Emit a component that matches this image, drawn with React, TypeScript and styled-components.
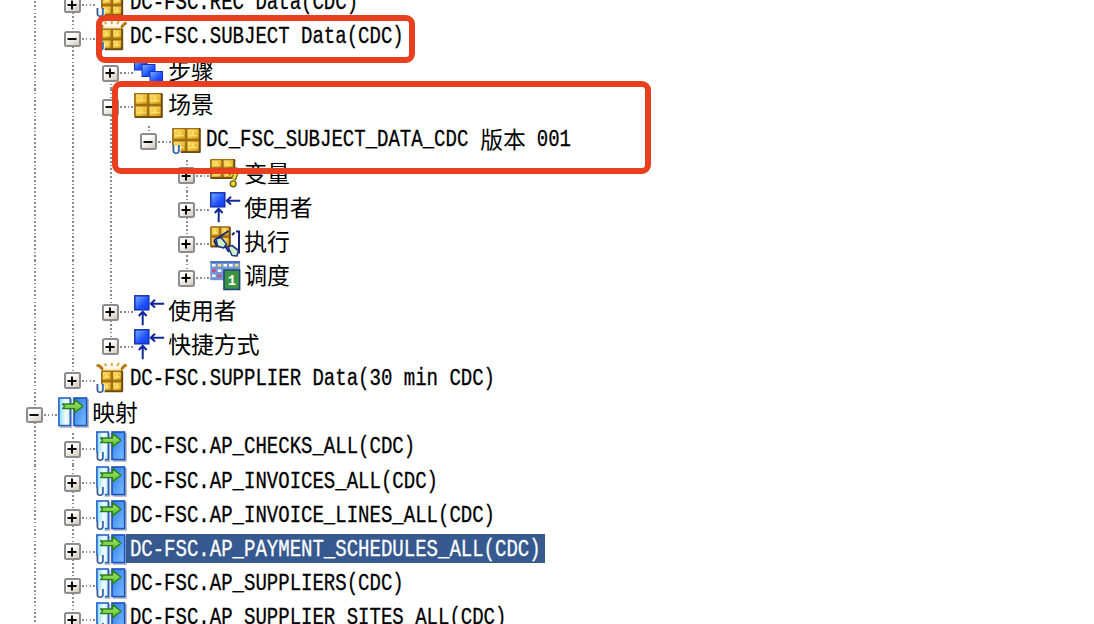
import React from "react";
import styled, { createGlobalStyle } from "styled-components";

const GlobalStyle = createGlobalStyle`
  * { box-sizing: border-box; }
  html, body { margin: 0; padding: 0; background: #fff; overflow: hidden; }
`;

const Page = styled.main`
  position: relative;
  width: 1094px;
  height: 624px;
  overflow: hidden;
  background: #fff;
  color: #000;
`;

const Tree = styled.div`
  display: flex;
  flex-direction: column;
  margin-top: -14px;
  padding-left: 15.5px;
`;

const Row = styled.div`
  display: flex;
  flex: none;
  height: 34.2px;
`;

const dots = "#8c8c8c 0 1.7px, transparent 1.7px 3.8px";

const Guide = styled.div<{ $line: boolean }>`
  flex: none;
  width: 38px;
  background: ${(p) => (p.$line ? `repeating-linear-gradient(180deg, ${dots}) 18px 0 / 2px 100% no-repeat` : "none")};
`;

const Branch = styled.div<{ $up: boolean; $last: boolean }>`
  flex: none;
  display: flex;
  align-items: flex-start;
  width: 42.4px;
  padding: 10.4px 0 0 10.6px;
  background: repeating-linear-gradient(180deg, ${dots}) 18px ${(p) => (p.$up ? 0 : 3)}px / 2px
    ${(p) => (p.$last ? "18px" : "100%")} no-repeat;
`;

const Toggle = styled.span`
  flex: none;
  display: flex;
  align-items: center;
  justify-content: center;
  width: 16.8px;
  height: 16.8px;
  border: 2px solid #8d8d8d;
  border-radius: 2.5px;
  background: linear-gradient(145deg, #fff 30%, #d2cabb);
`;

const Connector = styled.span`
  width: 13px;
  height: 2px;
  margin: 7.4px 0 0 1.6px;
  background: repeating-linear-gradient(90deg, ${dots});
`;

const IconBox = styled.span`
  flex: none;
  width: 30.4px;
  height: 30.4px;
  margin-top: 0.9px;
  svg { display: block; overflow: visible; }
`;

const Label = styled.span<{ $selected?: boolean }>`
  display: flex;
  height: 28.7px;
  margin-top: 0.9px;
  padding: 0 4.4px 0 3.6px;
  color: ${(p) => (p.$selected ? "#fff" : "#000")};
  background: ${(p) => (p.$selected ? "#36598f" : "transparent")};
  white-space: pre;
`;

const Latin = styled.span`
  font: 19.03px/28px "Liberation Mono", monospace;
  transform: scaleY(1.22);
  transform-origin: 50% 20px;
  margin-top: 3.1px;
  -webkit-text-stroke: 0.25px currentColor;
`;

const Han = styled.span`
  font: 22.8px/29px "Noto Sans CJK SC", sans-serif;
  margin-left: 0.4px;
  margin-right: -0.4px;
`;

const Highlight = styled.div<{ $x: number; $y: number; $w: number; $h: number }>`
  position: absolute;
  left: ${(p) => p.$x}px;
  top: ${(p) => p.$y}px;
  width: ${(p) => p.$w}px;
  height: ${(p) => p.$h}px;
  border: 6px solid #e8401f;
  border-radius: 9px;
`;

const Hidden = styled.svg`
  position: absolute;
`;

const Svg = ({ children }: { children: React.ReactNode }) => (
  <svg width="30.4" height="30.4" viewBox="0 0 30.4 30.4">{children}</svg>
);

const Defs = () => (
  <Hidden width="0" height="0">
    <defs>
      <linearGradient id="gold" x1="0" y1="0" x2="1" y2="1">
        <stop offset="0" stopColor="#fbe07a" />
        <stop offset=".5" stopColor="#f1c338" />
        <stop offset="1" stopColor="#cf9418" />
      </linearGradient>
      <linearGradient id="blue" x1="0" y1="0" x2="1" y2="1">
        <stop offset="0" stopColor="#7db4ff" />
        <stop offset=".6" stopColor="#1f52ff" />
        <stop offset="1" stopColor="#0f3df0" />
      </linearGradient>
      <linearGradient id="pale" x1="0" y1="0" x2="1" y2="0">
        <stop offset="0" stopColor="#7fdcff" />
        <stop offset=".6" stopColor="#f4fdff" />
        <stop offset="1" stopColor="#c5eeff" />
      </linearGradient>
      <linearGradient id="deep" x1="0" y1="0" x2="1" y2="1">
        <stop offset="0" stopColor="#2a78e8" />
        <stop offset="1" stopColor="#7cc0ff" />
      </linearGradient>
      <linearGradient id="green" x1="0" y1="0" x2="0" y2="1">
        <stop offset="0" stopColor="#b4f070" />
        <stop offset="1" stopColor="#4dbb28" />
      </linearGradient>
    </defs>
  </Hidden>
);

const Crate = ({ x, y, w, h }: { x: number; y: number; w: number; h: number }) => {
  const cw = (w - 6) / 2;
  const ch = (h - 6) / 2;
  return (
    <g>
      <rect x={x} y={y} width={w} height={h} rx="1.2" fill="#6b4a10" />
      <rect x={x} y={y} width={w - 1.8} height={h - 1.8} rx="1.2" fill="#a06f14" />
      {[0, 1].map((r) =>
        [0, 1].map((c) => {
          const cx = x + 1.5 + c * (cw + 2.4);
          const cy = y + 1.3 + r * (ch + 2.6);
          return (
            <g key={`${r}${c}`}>
              <rect x={cx} y={cy} width={cw} height={ch} rx=".8" fill="url(#gold)" />
              <path d={`M${cx + 1.2} ${cy + ch * 0.66}h${cw - 2.4}M${cx + cw * 0.5} ${cy + ch * 0.2}v${ch * 0.4}`} stroke="#fdea7c" strokeWidth="1.8" opacity=".8" />
            </g>
          );
        })
      )}
    </g>
  );
};

const Badge = () => (
  <g>
    <rect x="-.5" y="21.5" width="9.2" height="9.5" fill="#fff" />
    <text x="-.2" y="30.2" fontFamily="Liberation Sans, sans-serif" fontWeight="700" fontSize="12" fill="#2b5f9e">U</text>
  </g>
);

const icons: Record<string, React.ReactNode> = {
  pack: (
    <>
      <path d="M.6 2.400l3 .6 4.400 4.600v3M30.600 1.800l-2.600 1.400-3.400 4v3" stroke="#b9790f" strokeWidth="3" fill="none" />
      <path d="M8.500 .6l2 2.600M15.800-.2v3.400M23-.2l-2 3.400" stroke="#e0ac3a" strokeWidth="2" />
      <rect x="7" y="5.500" width="18" height="3.500" fill="#fbe9b0" />
      <Crate x={5.2} y={7.8} w={22} h={21.4} />
      <Badge />
    </>
  ),
  scene: <Crate x={0.3} y={4} w={28.5} h={25} />,
  sceneU: (
    <>
      <Crate x={0.3} y={4} w={28.5} h={25} />
      <Badge />
    </>
  ),
  steps: (
    <g fill="url(#blue)" stroke="#1233c8" strokeWidth="1">
      <rect x=".5" y="4" width="12.5" height="11" />
      <rect x="8" y="9.5" width="13" height="12" />
      <rect x="16" y="16.5" width="12.5" height="11" />
    </g>
  ),
  variable: (
    <>
      <Crate x={0.3} y={1} w={25} h={20} />
      <path d="M19 10.500l2.500 6M28 10l-4.500 11.500" stroke="#6d600f" strokeWidth="5" fill="none" />
      <path d="M19.400 11l3 6M27.600 11.500L23.500 21" stroke="#f2df30" strokeWidth="2.800" fill="none" />
      <circle cx="23.200" cy="25.800" r="2.900" fill="#efdc2c" stroke="#6d600f" strokeWidth="1.400" />
    </>
  ),
  user: (
    <>
      <rect x=".8" y=".8" width="14" height="14" fill="url(#blue)" stroke="#1231b5" strokeWidth="1.5" />
      <path d="M30.200 8.700H17M21 4.800l-4.200 3.900 4.200 3.900M8.700 30.200V17M4.800 21l3.900-4.200 3.900 4.200" stroke="#10279a" strokeWidth="2" fill="none" />
    </>
  ),
  run: (
    <>
      <Crate x={0.3} y={0.5} w={20.5} h={21} />
      <path d="M4 14.500L18.500 5M4 14.500l3 6M22 9l2.500-2.500M26 5.500h3v22M15 20l4 6" stroke="#152078" strokeWidth="2" fill="none" />
      <path d="M6 13l5-1.500 5.500 6.500-3 4-6-2zM18 21l4-1.500 6.500 5-1.500 5.500-5-.5z" fill="#cdf2cb" stroke="#22357c" strokeWidth="1.600" strokeLinejoin="round" />
    </>
  ),
  schedule: (
    <>
      <rect x=".3" y="1.200" width="29.800" height="19" fill="#7094d8" />
      <rect x=".3" y="1.200" width="29.800" height="1.600" fill="#4569b8" />
      {["#fff", "#f4e26a", "#fff", "#fff", "#f4e26a"].map((c, i) => <rect key={i} x={2 + i * 5.7} y="4" width="3.6" height="2.6" fill={c} />)}
      {["#e0485c", "#fff", "#fff", "#f4e26a", "#fff"].map((c, i) => <rect key={i} x={2 + i * 5.7} y="9.400" width="3.6" height="2.6" fill={c} />)}
      {["#fff", "#e0485c"].map((c, i) => <rect key={i} x={2 + i * 5.7} y="14.500" width="3.6" height="2.6" fill={c} />)}
      <rect x="14" y="10" width="15.600" height="19.500" fill="#3b9440" stroke="#21467c" strokeWidth="1.6" />
      <text x="17.800" y="25" fontFamily="Liberation Mono, monospace" fontWeight="700" fontSize="14" fill="#fff">1</text>
    </>
  ),
  map: (
    <>
      <path d="M2 30h11.500V2M17 30h13V2" stroke="#aaaeb8" strokeWidth="1.6" fill="none" />
      <rect x=".9" y="1" width="11.4" height="27.6" fill="url(#pale)" stroke="#2a62c8" strokeWidth="1.6" />
      <rect x="16" y="1" width="12.6" height="27.6" fill="url(#deep)" stroke="#1c50bd" strokeWidth="1.6" />
      <path d="M4.600 7H16.500V2.600L25 9.200 16.500 15.800V11.600H4.600L6.600 9.300z" fill="url(#green)" stroke="#2c7c1c" strokeWidth="1.4" strokeLinejoin="round" />
    </>
  ),
};
icons.mapU = <>{icons.map}<Badge /></>;

type Node = {
  guides: boolean[];
  icon: string;
  text?: string;
  han?: string;
  tail?: string;
  open?: boolean;
  first?: boolean;
  last?: boolean;
  selected?: boolean;
};

const rows: Node[] = [
  { guides: [true], icon: "pack", text: "DC-FSC.REC Data(CDC)" },
  { guides: [true], icon: "pack", text: "DC-FSC.SUBJECT Data(CDC)", open: true },
  { guides: [true, true], icon: "steps", han: "步骤", first: true },
  { guides: [true, true], icon: "scene", han: "场景", open: true },
  { guides: [true, true, true], icon: "sceneU", text: "DC_FSC_SUBJECT_DATA_CDC ", han: "版本", tail: " 001", open: true, first: true, last: true },
  { guides: [true, true, true, false], icon: "variable", han: "变量", first: true },
  { guides: [true, true, true, false], icon: "user", han: "使用者" },
  { guides: [true, true, true, false], icon: "run", han: "执行" },
  { guides: [true, true, true, false], icon: "schedule", han: "调度", last: true },
  { guides: [true, true], icon: "user", han: "使用者" },
  { guides: [true, true], icon: "user", han: "快捷方式", last: true },
  { guides: [true], icon: "pack", text: "DC-FSC.SUPPLIER Data(30 min CDC)", last: true },
  { guides: [], icon: "map", han: "映射", open: true },
  { guides: [true], icon: "mapU", text: "DC-FSC.AP_CHECKS_ALL(CDC)", first: true },
  { guides: [true], icon: "mapU", text: "DC-FSC.AP_INVOICES_ALL(CDC)" },
  { guides: [true], icon: "mapU", text: "DC-FSC.AP_INVOICE_LINES_ALL(CDC)" },
  { guides: [true], icon: "mapU", text: "DC-FSC.AP_PAYMENT_SCHEDULES_ALL(CDC)", selected: true },
  { guides: [true], icon: "mapU", text: "DC-FSC.AP_SUPPLIERS(CDC)" },
  { guides: [true], icon: "mapU", text: "DC-FSC.AP_SUPPLIER_SITES_ALL(CDC)" },
];

const TreeRow = ({ node }: { node: Node }) => (
  <Row>
    {node.guides.map((line, i) => <Guide key={i} $line={line} />)}
    <Branch $up={!node.first} $last={!!node.last}>
      <Toggle>
        <svg width="12" height="12" viewBox="0 0 12 12">
          <path d={node.open ? "M1.500 6h9" : "M1.500 6h9M6 1.500v9"} stroke="#000" strokeWidth="1.9" />
        </svg>
      </Toggle>
      <Connector />
    </Branch>
    <IconBox><Svg>{icons[node.icon]}</Svg></IconBox>
    <Label $selected={node.selected}>
      {node.text && <Latin>{node.text}</Latin>}
      {node.han && <Han>{node.han}</Han>}
      {node.tail && <Latin>{node.tail}</Latin>}
    </Label>
  </Row>
);

export default function App() {
  return (
    <Page>
      <GlobalStyle />
      <Defs />
      <Tree>
        {rows.map((node, i) => <TreeRow key={i} node={node} />)}
      </Tree>
      <Highlight $x={95.5} $y={14.5} $w={319} $h={48} />
      <Highlight $x={112} $y={80.5} $w={539} $h={93.5} />
    </Page>
  );
}
